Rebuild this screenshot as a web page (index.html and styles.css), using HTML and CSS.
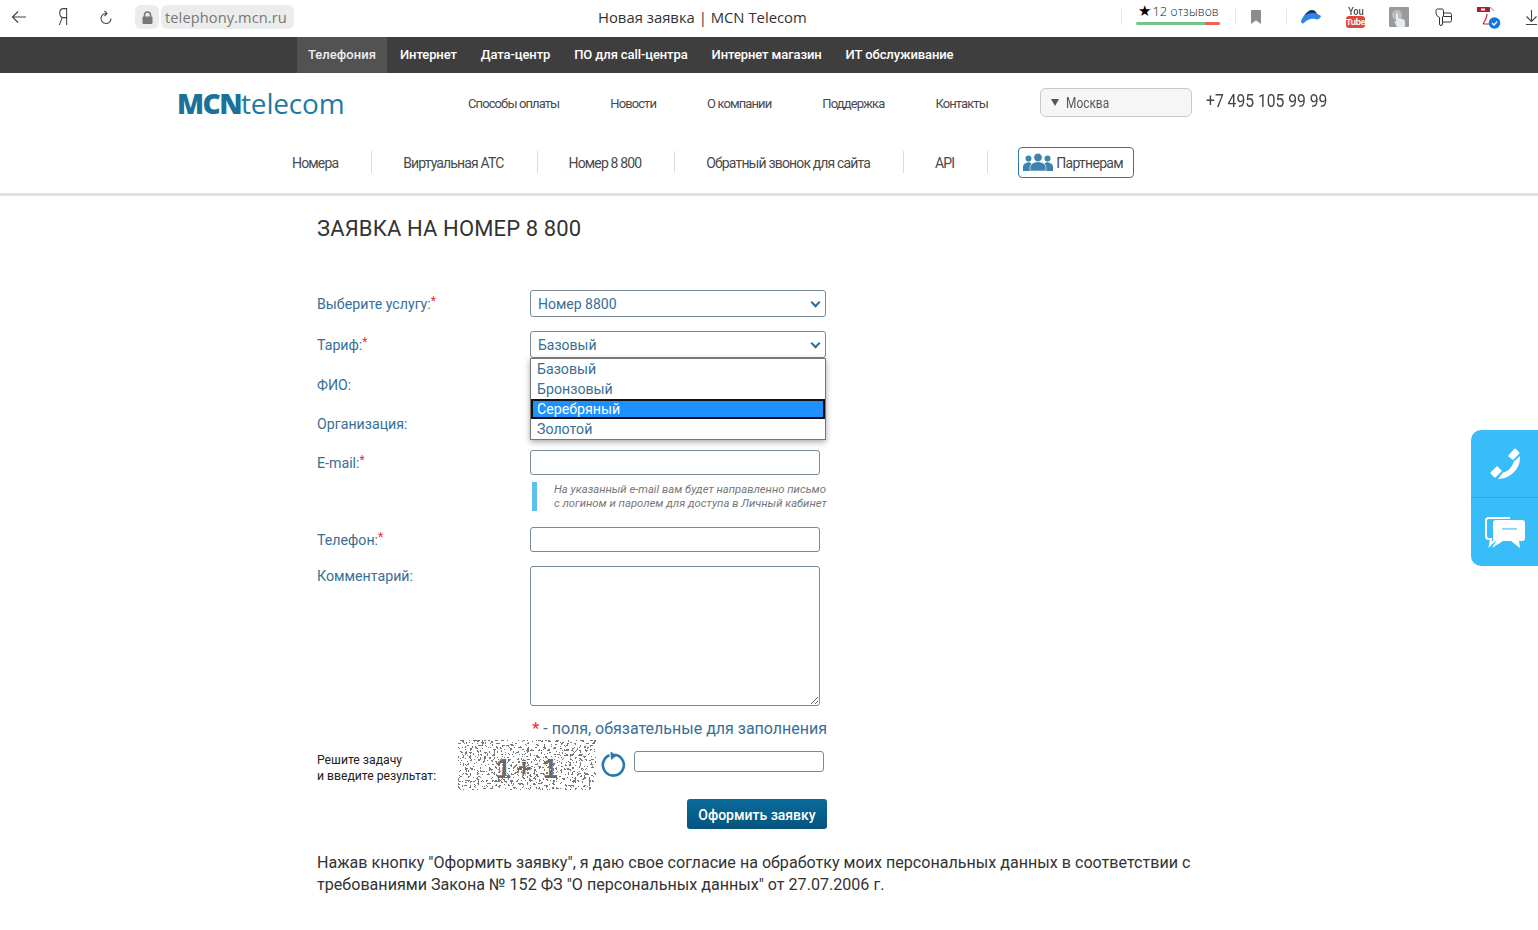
FILE: index.html
```html
<!DOCTYPE html>
<html lang="ru">
<head>
    <meta charset="UTF-8">
    <title>Новая заявка | MCN Telecom</title>
    <link rel="stylesheet" href="styles.css">
</head>
<body>
    <!-- Browser toolbar -->
    <div class="browser-bar">
        <div class="browser-left">
            <svg width="16" height="14" viewBox="0 0 16 14"><path d="M15 7H1.500M7 1.500 1.500 7 7 12.500" fill="none" stroke="#444" stroke-width="1.200"/></svg>
            <span class="ya">Я</span>
            <svg class="reload" width="14" height="15" viewBox="0 0 14 15"><path d="M12 8.500a5 5 0 1 1-4.500-5M5.500 0.800 8 3.500 5.500 6" fill="none" stroke="#444" stroke-width="1.100"/></svg>
            <div class="address">
                <span class="lock-pill"><svg width="11" height="13" viewBox="0 0 11 13"><path d="M2.500 6V4a3 3 0 0 1 6 0v2" fill="none" stroke="#777" stroke-width="1.500"/><rect x="0.500" y="5.500" width="10" height="7.500" rx="1" fill="#777"/></svg></span>
                <span class="url-pill">telephony.mcn.ru</span>
            </div>
        </div>
        <div class="browser-title">Новая заявка | MCN Telecom</div>
        <div class="browser-right">
            <span class="bar-sep"></span>
            <div class="reviews">
                <div class="reviews-text"><span class="star">★</span> 12 <span class="reviews-word">отзывов</span></div>
                <div class="reviews-bar"></div>
            </div>
            <span class="bar-sep sep-b"></span>
            <svg class="ic-mark" width="10" height="14" viewBox="0 0 10 14"><path d="M0 0h10v14L5 10.500 0 14z" fill="#8d8d8d"/></svg>
            <span class="bar-sep sep-c"></span>
            <svg class="ic-cloud" width="20" height="14" viewBox="0 0 20 14"><path d="M0 11C2 7 4 3 7 2c4-1 8 1 13 4-1 3-3 4-6 3-5-1-9 2-11 4-1 1-3 0-3-2z" fill="#2f86e0"/><path d="M4 5C6 2 8 0 11 0c3 0 4 2 5 4-4-2-8-1-12 1z" fill="#17365f"/></svg>
            <div class="yt"><span class="yt-you">You</span><span class="yt-tube">Tube</span></div>
            <svg class="ic-gray" width="20" height="20" viewBox="0 0 20 20"><rect width="20" height="20" rx="1" fill="#9a9a9a"/><circle cx="8" cy="8" r="5" fill="#bdbdbd"/><path d="M7 7q1-1.500 2 0v4l5 1q2 1 2 3v5H8l-3-6 2 1z" fill="#e6ebef"/></svg>
            <svg class="ic-ext" width="17" height="18" viewBox="0 0 17 18"><path d="M1 2.500Q1 1 2.500 1H7q1.500 0 1.500 1.500V5H15q1.500 0 1.500 1.500v6q0 1.500-1.500 1.500H7.500V16q0 1.500-1.500 1.500T4.500 16V9.500Q1 8 1 5z" fill="#fff" stroke="#333"/><path d="M8.500 5v3.500h8M7.500 14V8.500" fill="none" stroke="#333"/></svg>
            <svg class="ic-pdf" width="24" height="24" viewBox="0 0 24 24"><rect x="0" y="2" width="13" height="5" fill="#a81e2d"/><rect x="4" y="3.500" width="4" height="2" fill="#fff"/><path d="M13 2l4 4" stroke="#bbb" stroke-width="1.500"/><path d="M10 9c0 4-2 7-4 10M6 19h7" fill="none" stroke="#c8222f" stroke-width="1.200"/><circle cx="17.500" cy="18" r="5.800" fill="#0f76de"/><path d="M15 18l2 2 3.200-3.500" fill="none" stroke="#fff" stroke-width="1.300"/></svg>
            <svg class="ic-down" width="11" height="15" viewBox="0 0 11 15"><path d="M5.500 0v11M.500 6.500 5.500 11.500 10.500 6.500M0 14.500h11" fill="none" stroke="#444" stroke-width="1.100"/></svg>
        </div>
    </div>

    <!-- Dark top menu -->
    <nav class="top-menu">
        <a class="top-item active">Телефония</a>
        <a class="top-item">Интернет</a>
        <a class="top-item">Дата-центр</a>
        <a class="top-item">ПО для call-центра</a>
        <a class="top-item">Интернет магазин</a>
        <a class="top-item">ИТ обслуживание</a>
    </nav>

    <!-- Site header -->
    <header class="site-header">
        <div class="header-row">
            <div class="logo"><b>MCN</b>telecom</div>
            <nav class="sub-links">
                <a>Способы оплаты</a>
                <a>Новости</a>
                <a>О компании</a>
                <a>Поддержка</a>
                <a>Контакты</a>
            </nav>
            <div class="city"><span class="city-arrow"></span><span class="city-name">Москва</span></div>
            <div class="phone"><span>+7 495 105 99 99</span></div>
        </div>
        <nav class="main-links">
            <a>Номера</a>
            <a>Виртуальная АТС</a>
            <a>Номер 8 800</a>
            <a>Обратный звонок для сайта</a>
            <a>API</a>
            <div class="partner-btn">
                <svg width="30" height="18" viewBox="0 0 30 18"><g fill="#3f83ac"><circle cx="5.500" cy="5.500" r="3"/><path d="M0 18v-4q0-3 3-4l2.500-1 2.500 1 1 4v4z"/><circle cx="24.500" cy="5.500" r="3"/><path d="M30 18v-4q0-3-3-4l-2.500-1-2.500 1-1 4v4z"/></g><circle cx="15" cy="4.500" r="4.200" fill="#3f83ac" stroke="#fff" stroke-width=".6"/><path d="M7 18v-4q0-3 4-4.500l4-1 4 1q4 1.500 4 4.500v4z" fill="#3f83ac" stroke="#fff" stroke-width=".6"/></svg>
                Партнерам
            </div>
        </nav>
    </header>

    <!-- Order form -->
    <main class="content">
        <h1>Заявка на номер 8 800</h1>

        <form class="order-form">
            <div class="row row-select">
                <span class="lbl">Выберите услугу:<i>*</i></span>
                <span class="fake-select">Номер 8800</span>
            </div>
            <div class="row row-select">
                <span class="lbl">Тариф:<i>*</i></span>
                <span class="fake-select">Базовый</span>
                <ul class="dropdown">
                    <li>Базовый</li>
                    <li>Бронзовый</li>
                    <li class="selected">Серебряный</li>
                    <li>Золотой</li>
                </ul>
            </div>
            <div class="row row-hidden"><span class="lbl">ФИО:</span></div>
            <div class="row row-hidden"><span class="lbl">Организация:</span></div>
            <div class="row row-email">
                <span class="lbl">E-mail:<i>*</i></span>
                <div class="field">
                    <input class="text-input" type="text">
                    <p class="hint">На указанный e-mail вам будет направленно письмо<br>с логином и паролем для доступа в Личный кабинет</p>
                </div>
            </div>
            <div class="row row-phone">
                <span class="lbl">Телефон:<i>*</i></span>
                <input class="text-input" type="text">
            </div>
            <div class="row row-comment">
                <span class="lbl">Комментарий:</span>
                <textarea class="text-area"></textarea>
            </div>
            <div class="required-note"><i>*</i> - поля, обязательные для заполнения</div>

            <div class="captcha-row">
                <span class="captcha-label">Решите задачу<br>и введите результат:</span>
                <svg class="captcha" width="138" height="50" viewBox="0 0 138 50">
                    <filter id="noise" x="0" y="0" width="100%" height="100%" color-interpolation-filters="sRGB">
                        <feTurbulence type="fractalNoise" baseFrequency="0.42" numOctaves="2" seed="7"/>
                        <feColorMatrix values="0 0 0 0 0.47  0 0 0 0 0.47  0 0 0 0 0.47  1.500 1.500 0 0 -1.200"/>
                        <feComponentTransfer><feFuncA type="discrete" tableValues="0 1"/></feComponentTransfer>
                    </filter>
                    <filter id="specks" x="0" y="0" width="100%" height="100%" color-interpolation-filters="sRGB">
                        <feTurbulence type="fractalNoise" baseFrequency="0.5" numOctaves="2" seed="21"/>
                        <feColorMatrix values="0 0 0 0 1  0 0 0 0 1  0 0 0 0 1  1.500 1.500 0 0 -1.480"/>
                        <feComponentTransfer><feFuncA type="discrete" tableValues="0 1"/></feComponentTransfer>
                    </filter>
                    <rect width="138" height="50" fill="#fff" filter="url(#noise)"/>
                    <text x="38" y="38" class="captcha-text">1+<tspan dx="6">1</tspan></text>
                    <rect width="138" height="50" fill="#fff" filter="url(#specks)"/>
                </svg>
                <svg class="refresh" width="26" height="28" viewBox="0 0 26 28"><path d="M9.500 4.300A10.500 10.500 0 1 0 15 3.700" fill="none" stroke="#2a78a8" stroke-width="2.600"/><path d="M10.500 0.500 17 4.500 11 9z" fill="#2a78a8"/></svg>
                <input class="text-input captcha-input" type="text">
            </div>

            <div class="submit-row"><button type="button" class="submit-btn">Оформить заявку</button></div>
        </form>

        <p class="consent">Нажав кнопку "Оформить заявку", я даю свое согласие на обработку моих персональных данных в соответствии с требованиями Закона № 152 ФЗ "О персональных данных" от 27.07.2006 г.</p>
    </main>

    <!-- Floating contact buttons -->
    <div class="side-widget">
        <div class="side-btn">
            <svg width="30" height="31" viewBox="0 0 30 31"><g fill="#fff"><path d="M18 8 24 1Q25 0 26 1L29 4Q30 5 29 6L23 12z"/><path d="M1 24 7 18 12 23 6 29Q5 30 4 29L1 26Q0 25 1 24z"/><path d="M24 13.500 30 8C31 19 22 31 8 31L13 24.500C18 24 22 19 24 13.500z"/></g></svg>
        </div>
        <div class="side-btn">
            <svg width="42" height="36" viewBox="0 0 42 36"><path d="M26 4H5Q2 4 2 7v15q0 3 3 3h2l-1 6 6-6" fill="none" stroke="#fff" stroke-width="2"/><path d="M12 6h26q3 0 3 3v15q0 3-3 3h-3l1 7-9-7H12q-3 0-3-3V9q0-3 3-3z" fill="#fff"/><path d="M12 27l-4 7 11-7z" fill="#fff"/><rect x="18" y="14" width="15" height="1.800" fill="#8fd0ee"/></svg>
        </div>
    </div>
</body>
</html>
```

FILE: styles.css
```css
/* General Reset */
* {
    margin: 0;
    padding: 0;
    box-sizing: border-box;
}

body {
    width: 1538px;
    height: 930px;
    overflow: hidden;
    position: relative;
    background: #fff;
    font-family: Roboto, "Liberation Sans", sans-serif;
    color: #333;
}

/* Browser toolbar */
.browser-bar {
    height: 37px;
    display: flex;
    align-items: center;
    background: #fff;
}

.browser-left {
    width: 598px;
    flex-shrink: 0;
    display: flex;
    align-items: center;
    padding: 0 0 3px 11px;
}

.ya {
    width: 14px;
    margin-left: 29px;
    font: 300 24px/28px Roboto, sans-serif;
    color: #444;
    transform: scaleX(.72);
}

.reload {
    margin-left: 29px;
}

.address {
    display: flex;
    gap: 2px;
    margin-left: 22px;
}

.lock-pill {
    width: 24px;
    height: 24px;
    display: flex;
    align-items: center;
    justify-content: center;
    background: #ececec;
    border-radius: 6px;
}

.url-pill {
    width: 133px;
    height: 24px;
    padding-left: 4px;
    background: #ececec;
    border-radius: 6px;
    font: 14.6px/24px "Open Sans", sans-serif;
    letter-spacing: .1px;
    color: #777;
}

.browser-title {
    width: 208px;
    flex-shrink: 0;
    padding-bottom: 3px;
    font: 14.85px/20px "Open Sans", sans-serif;
    color: #333;
    white-space: nowrap;
}

.browser-right {
    display: flex;
    align-items: center;
    margin-left: 315px;
    padding-bottom: 3px;
    flex-shrink: 0;
}

.bar-sep {
    width: 1px;
    height: 16px;
    background: #e6e6e6;
}

.sep-b {
    margin-left: 15px;
}

.sep-c {
    margin-left: 25px;
}

.reviews {
    width: 84px;
    margin-left: 14px;
    margin-top: -5px;
}

.reviews-text {
    font: 300 13px/15px "Open Sans", sans-serif;
    color: #222;
    white-space: nowrap;
    padding-left: 2px;
}

.reviews-word {
    font-size: 12px;
    letter-spacing: .15px;
}

.star {
    color: #000;
    font-size: 15px;
    line-height: 0;
    margin-right: -2px;
}

.reviews-bar {
    height: 3px;
    margin-top: 3px;
    border-radius: 2px;
    background: linear-gradient(90deg, #74c58c 82%, #ee5f55 82%);
}

.ic-mark {
    margin-left: 15px;
}

.ic-cloud {
    margin-left: 14px;
}

.yt {
    width: 19px;
    margin-left: 25px;
    display: flex;
    flex-direction: column;
    align-items: center;
    font: bold 11px/9px "Liberation Sans", sans-serif;
}

.yt-you {
    color: #555;
    transform: scaleX(.8);
}

.yt-tube {
    width: 19px;
    height: 12px;
    text-align: center;
    background: #e4473a;
    color: #fff;
    border-radius: 3px;
    font-size: 9px;
    line-height: 12px;
    letter-spacing: -.5px;
}

.ic-gray {
    margin-left: 24px;
}

.ic-ext {
    margin-left: 26px;
}

.ic-pdf {
    margin-left: 25px;
}

.ic-down {
    margin-left: 25px;
}

/* Dark top menu */
.top-menu {
    height: 36px;
    display: flex;
    padding-left: 297px;
    background: #3e3e3e;
}

.top-item {
    padding: 0 12px;
    font-size: 13px;
    font-weight: 500;
    line-height: 35px;
    letter-spacing: -.1px;
    color: #fff;
    white-space: nowrap;
}

.top-item.active {
    width: 90px;
    margin-right: 1px;
    padding: 0;
    text-align: center;
    letter-spacing: .05px;
    background: #525252;
    color: #eee;
}

/* Site header */
.site-header {
    height: 123px;
    background: #fff;
    border-bottom: 3px solid #e2e2e2;
}

.header-row {
    height: 60px;
    display: flex;
    align-items: center;
    padding-left: 177px;
}

.logo {
    width: 291px;
    font: 28px/32px "Open Sans", sans-serif;
    letter-spacing: -.2px;
    color: #1f7ba3;
}

.logo b {
    font-weight: 800;
    letter-spacing: -1.5px;
    color: #1c7199;
}

.sub-links {
    display: flex;
    gap: 51px;
    width: 572px;
}

.sub-links a {
    font-size: 13px;
    letter-spacing: -.9px;
    color: #4a4a4a;
    white-space: nowrap;
}

.city {
    width: 152px;
    height: 29px;
    margin-top: -1px;
    display: flex;
    align-items: center;
    padding-left: 10px;
    background: #f6f6f6;
    border: 1px solid #c9c9c9;
    border-radius: 6px;
    font-size: 14px;
    color: #555;
}

.city-arrow {
    width: 0;
    height: 0;
    margin-right: 7px;
    border-left: 4px solid transparent;
    border-right: 4px solid transparent;
    border-top: 7px solid #555;
}

.city-name {
    transform: scaleX(.85);
    transform-origin: left;
}

.phone {
    margin-left: 14px;
    margin-bottom: 5px;
    font-size: 19px;
    color: #444;
}

.phone span {
    display: inline-block;
    transform: scaleX(.825);
    transform-origin: left;
    white-space: nowrap;
}

.main-links {
    display: flex;
    align-items: center;
    height: 40px;
    margin-top: 9px;
    padding-left: 292px;
}

.main-links a {
    padding: 2px 33px 0 0;
    margin-right: 31px;
    line-height: 20px;
    border-right: 1px solid #ddd;
    font-size: 14px;
    letter-spacing: -.85px;
    color: #4a4a4a;
    white-space: nowrap;
}

.partner-btn {
    width: 116px;
    height: 31px;
    margin-left: -1px;
    display: flex;
    align-items: center;
    gap: 3px;
    padding: 1px 0 0 4px;
    border: 1px solid #2a7aa3;
    border-radius: 4px;
    font-size: 14px;
    letter-spacing: -.7px;
    color: #4a4a4a;
    white-space: nowrap;
}

.partner-btn svg {
    margin-top: -1px;
}

/* Order form */
.content {
    padding-left: 317px;
}

h1 {
    margin-top: 18px;
    font-size: 22px;
    font-weight: 400;
    line-height: 30px;
    letter-spacing: .13px;
    text-transform: uppercase;
    color: #333;
}

.order-form {
    width: 510px;
    margin-top: 46px;
    font-size: 14.2px;
    color: #376f95;
}

.row {
    display: flex;
    position: relative;
}

.lbl {
    width: 213px;
    flex-shrink: 0;
    white-space: nowrap;
}

.lbl i,
.required-note i {
    font-style: normal;
    color: #e53030;
    font-size: 12px;
    line-height: 0;
    vertical-align: 4px;
}

.row-select {
    height: 41px;
}

.row-select .lbl {
    line-height: 29px;
}

.fake-select {
    width: 296px;
    height: 27px;
    position: relative;
    padding-left: 7px;
    border: 1px solid #7b8a94;
    border-radius: 3px;
    font-size: 14px;
    line-height: 26px;
    background: #fff;
}

.fake-select::after {
    content: "";
    position: absolute;
    right: 6px;
    top: 8px;
    width: 5px;
    height: 5px;
    border-right: 2px solid #2f6d94;
    border-bottom: 2px solid #2f6d94;
    transform: rotate(45deg);
}

.dropdown {
    position: absolute;
    left: 213px;
    top: 27px;
    width: 296px;
    height: 82px;
    z-index: 2;
    list-style: none;
    background: #fff;
    border: 1px solid #767676;
    box-shadow: 0 2px 6px rgba(0, 0, 0, .35);
}

.dropdown li {
    height: 20px;
    padding-left: 6px;
    line-height: 20px;
}

.dropdown li.selected {
    padding-left: 4px;
    background: #1e90ff;
    border: 2px solid #111;
    color: #fff;
    line-height: 16px;
}

.row-hidden {
    height: 39px;
    line-height: 27px;
}

.row-email {
    height: 77px;
}

.row-email .lbl,
.row-phone .lbl {
    line-height: 27px;
}

.text-input {
    display: block;
    width: 290px;
    height: 25px;
    border: 1px solid #7b8a94;
    border-radius: 3px;
    background: #fff;
    outline: none;
}

.hint {
    width: 298px;
    margin: 7px 0 0 2px;
    padding: 1px 0 0 17px;
    border-left: 5px solid #5fc0ec;
    font-size: 11.3px;
    font-style: italic;
    line-height: 14px;
    color: #777;
    white-space: nowrap;
}

.row-phone {
    height: 39px;
}

.row-comment .lbl {
    line-height: 20px;
}

.text-area {
    display: block;
    width: 290px;
    height: 140px;
    border: 1px solid #7b8a94;
    border-radius: 3px;
    background: #fff;
    outline: none;
}

.required-note {
    margin: 13px 0 0 215px;
    font-size: 16px;
    line-height: 20px;
    white-space: nowrap;
}

.required-note i {
    font-size: 17px;
    vertical-align: 0;
}

.captcha-row {
    display: flex;
    align-items: center;
    height: 50px;
    margin-top: 1px;
}

.captcha-label {
    width: 141px;
    font-size: 12.2px;
    line-height: 16px;
    color: #222;
    margin-top: 6px;
}

.captcha {
    display: block;
    flex-shrink: 0;
}

.captcha-text {
    font: bold 27px "Liberation Sans", sans-serif;
    fill: #6a6a6a;
    letter-spacing: 5px;
}

.refresh {
    margin-left: 4px;
    flex-shrink: 0;
}

.captcha-input {
    width: 190px;
    height: 21px;
    margin: -7px 0 0 8px;
}

.submit-row {
    display: flex;
    justify-content: flex-end;
    margin-top: 9px;
}

.submit-btn {
    width: 140px;
    height: 30px;
    padding-top: 1px;
    border: none;
    border-radius: 3px;
    background: linear-gradient(#0b6b9a, #05547e);
    font-family: inherit;
    font-size: 14px;
    font-weight: 500;
    color: #fff;
}

.consent {
    width: 900px;
    margin-top: 23px;
    font-size: 16.1px;
    line-height: 22px;
    color: #333;
}

/* Floating contact buttons */
.side-widget {
    position: absolute;
    right: 0;
    top: 430px;
    width: 67px;
    height: 136px;
    background: #38bdf8;
    border-radius: 10px 0 0 10px;
}

.side-btn {
    height: 67px;
    display: flex;
    align-items: center;
    justify-content: center;
}

.side-btn + .side-btn {
    height: 69px;
    border-top: 1px solid #2ba6dc;
}
```
